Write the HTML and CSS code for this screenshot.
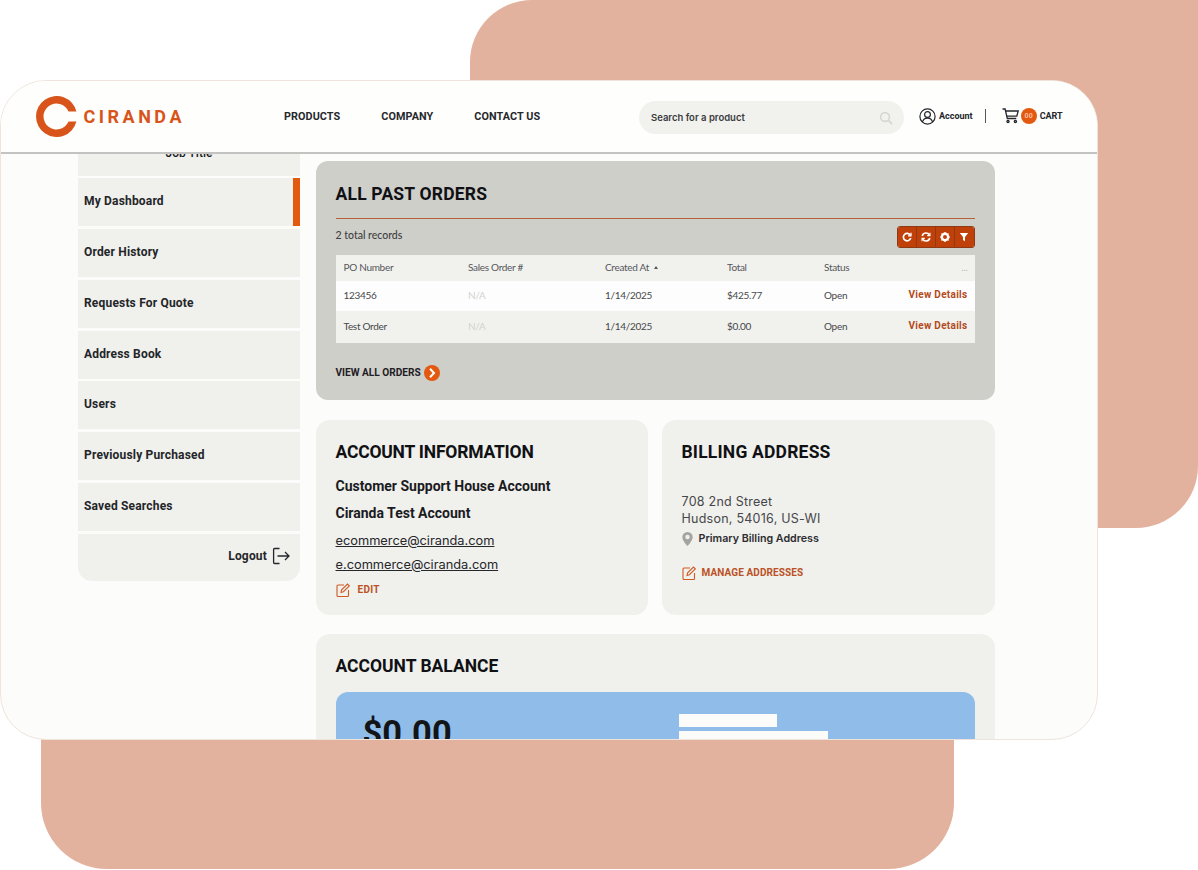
FILE: index.html
```html
<!DOCTYPE html>
<html lang="en">
<head>
<meta charset="utf-8">
<title>Ciranda Dashboard</title>
<link rel="stylesheet" href="styles.css">
</head>
<body>
<div class="blob blob-top"></div>
<div class="blob blob-bottom"></div>
<div class="window">
  <header class="header">
    <a class="logo">
      <svg width="41" height="41" viewBox="0.5 0.5 41 41"><path d="M40.9 16A20.5 20.5 0 1 0 40.9 26H33A13 13 0 1 1 33 16Z" fill="#d9541a"/></svg>
      <span class="logo-text">CIRANDA</span>
    </a>
    <nav class="nav">
      <a>PRODUCTS</a><a>COMPANY</a><a>CONTACT US</a>
    </nav>
    <div class="search">
      <span>Search for a product</span>
      <svg width="14" height="14" viewBox="0 0 14 14"><circle cx="6" cy="6" r="4.400" fill="none" stroke="#d6d6d2" stroke-width="1.600"/><path d="M9.200 9.200L13 13" stroke="#d6d6d2" stroke-width="1.800"/></svg>
    </div>
    <a class="account">
      <svg width="17" height="17" viewBox="0 0 17 17" fill="none" stroke="#24262b" stroke-width="1.200"><circle cx="8.500" cy="8.500" r="7.600"/><circle cx="8.500" cy="6.500" r="2.900"/><path d="M3.400 14c.8-2.600 2.700-3.800 5.100-3.800s4.300 1.200 5.100 3.800"/></svg>
      <span>Account</span>
    </a>
    <span class="sep"></span>
    <a class="cart">
      <svg width="17" height="16" viewBox="0 0 17 16" fill="none" stroke="#24262b" stroke-width="1.300"><path d="M.5 1h2.600l2.200 9.500h9"/><path d="M3.600 3h12.600l-1.400 5.200H4.800"/><circle cx="6" cy="13.600" r="1.100"/><circle cx="13.400" cy="13.600" r="1.100"/></svg>
      <span class="badge">00</span>
      <span>CART</span>
    </a>
  </header>
  <main class="main">
    <aside class="sidebar">
      <div class="side-top"><span>Job Title</span></div>
      <a class="side-item active">My Dashboard</a>
      <a class="side-item">Order History</a>
      <a class="side-item">Requests For Quote</a>
      <a class="side-item">Address Book</a>
      <a class="side-item">Users</a>
      <a class="side-item">Previously Purchased</a>
      <a class="side-item">Saved Searches</a>
      <a class="side-item logout">Logout
        <svg width="18" height="18" viewBox="0 0 18 18" fill="none" stroke="#24262b" stroke-width="1.300"><path d="M7.500 1.500H2.600a1 1 0 0 0-1 1v13a1 1 0 0 0 1 1h4.900"/><path d="M5.500 9h11.500M13 5l4 4-4 4"/></svg>
      </a>
    </aside>
    <section class="content">
      <div class="orders">
        <h2 class="title orders-title">ALL PAST ORDERS</h2>
        <div class="rule"></div>
        <div class="tools">
          <span class="records">2 total records</span>
          <div class="btns">
            <button class="btn"><svg width="10" height="10" viewBox="0 0 10 10" fill="none" stroke="#fff" stroke-width="1.700"><path d="M8.300 3.200A3.700 3.700 0 1 0 8.700 6"/><path d="M9 .8v3H6" stroke-width="1.300"/></svg></button>
            <button class="btn"><svg width="10" height="10" viewBox="0 0 10 10" fill="none" stroke="#fff" stroke-width="1.600"><path d="M1.200 4A3.900 3.900 0 0 1 8.400 3"/><path d="M8.800 6A3.900 3.900 0 0 1 1.600 7"/><path d="M9 .8v2.800H6.200M1 9.200V6.400h2.800" stroke-width="1.100"/></svg></button>
            <button class="btn"><svg width="10" height="10" viewBox="0 0 10 10"><circle cx="5" cy="5" r="3.200" fill="none" stroke="#fff" stroke-width="2.400"/><path d="M5 0v2M5 8v2M0 5h2M8 5h2M1.500 1.500l1.300 1.300M7.200 7.200l1.300 1.300M8.500 1.500L7.200 2.800M2.800 7.200L1.500 8.500" stroke="#fff" stroke-width="1.200"/></svg></button>
            <button class="btn"><svg width="10" height="10" viewBox="0 0 10 10"><path d="M.8 1h8.400L6 5v4.200L4 8V5z" fill="#fff"/></svg></button>
          </div>
        </div>
        <div class="table">
          <div class="row head">
            <span>PO Number</span><span>Sales Order #</span><span>Created At <i class="sort"></i></span><span>Total</span><span>Status</span><span class="dots">...</span>
          </div>
          <div class="row one">
            <span>123456</span><span class="na">N/A</span><span>1/14/2025</span><span>$425.77</span><span>Open</span><a class="details">View Details</a>
          </div>
          <div class="row two">
            <span>Test Order</span><span class="na">N/A</span><span>1/14/2025</span><span>$0.00</span><span>Open</span><a class="details">View Details</a>
          </div>
        </div>
        <a class="view-all">VIEW ALL ORDERS
          <svg width="16" height="16" viewBox="0 0 16 16"><circle cx="8" cy="8" r="8" fill="#e2590f"/><path d="M6 3.800L10 8l-4 4.200" fill="none" stroke="#fff" stroke-width="2"/></svg>
        </a>
      </div>
      <div class="cards">
        <div class="card info">
          <h2 class="title info-title">ACCOUNT INFORMATION</h2>
          <p class="strong first">Customer Support House Account</p>
          <p class="strong">Ciranda Test Account</p>
          <a class="mail first-mail">ecommerce@ciranda.com</a>
          <a class="mail">e.commerce@ciranda.com</a>
          <a class="action edit">
            <svg width="14" height="14" viewBox="0 0 14 14" fill="none" stroke="#cf5a26" stroke-width="1.100"><path d="M8 2H2a1 1 0 0 0-1 1v9.500a1 1 0 0 0 1 1h9.500a1 1 0 0 0 1-1V7"/><path d="M5 9.500l.6-2.600L11.500 1l1.800 1.800-5.900 5.900z"/></svg>
            EDIT
          </a>
        </div>
        <div class="card billing">
          <h2 class="title billing-title">BILLING ADDRESS</h2>
          <p class="address">708 2nd Street<br>Hudson, 54016, US-WI</p>
          <div class="primary">
            <svg width="11" height="14" viewBox="0 0 11 14"><path d="M5.500 0a5.200 5.200 0 0 1 5.200 5.200C10.700 8.500 5.500 14 5.500 14S.3 8.500.3 5.200A5.200 5.200 0 0 1 5.500 0z" fill="#a3a3a0"/><circle cx="5.500" cy="5" r="2.200" fill="#f0f0ec"/></svg>
            <span>Primary Billing Address</span>
          </div>
          <a class="action manage">
            <svg width="14" height="14" viewBox="0 0 14 14" fill="none" stroke="#cf5a26" stroke-width="1.100"><path d="M8 2H2a1 1 0 0 0-1 1v9.500a1 1 0 0 0 1 1h9.500a1 1 0 0 0 1-1V7"/><path d="M5 9.500l.6-2.600L11.500 1l1.800 1.800-5.900 5.900z"/></svg>
            MANAGE ADDRESSES
          </a>
        </div>
      </div>
      <div class="card balance">
        <h2 class="title">ACCOUNT BALANCE</h2>
        <div class="blue">
          <div class="amount">$0.00</div>
          <div class="bars"><div class="bar bar-a"></div><div class="bar bar-b"></div></div>
        </div>
      </div>
    </section>
  </main>
</div>
</body>
</html>
```

FILE: styles.css
```css
* { box-sizing: border-box; }
html, body { margin: 0; padding: 0; }
body {
  width: 1198px;
  height: 870px;
  position: relative;
  overflow: hidden;
  background: #fff;
  font-family: "Roboto", "Liberation Sans", sans-serif;
  color: #17181c;
}
a { display: block; }
p, h2 { margin: 0; }

.blob { position: absolute; background: #e3b29e; }
.blob-top { left: 470px; top: 0; width: 728px; height: 528px; border-radius: 62px 0 62px 0; }
.blob-bottom { left: 41px; top: 700px; width: 913px; height: 169px; border-radius: 0 0 66px 66px; }

.window {
  position: absolute;
  left: 0;
  top: 80px;
  width: 1098px;
  height: 660px;
  background: #fcfcfa;
  border: 1.500px solid #efe4db;
  border-radius: 46px;
  overflow: hidden;
  display: flex;
  flex-direction: column;
}

.header {
  flex: none;
  height: 72.500px;
  display: flex;
  align-items: center;
  padding-left: 34.500px;
  background: #fefefd;
  border-bottom: 2px solid #c3c4c2;
  position: relative;
  z-index: 2;
}
.logo { display: flex; align-items: center; gap: 7px; width: 248.500px; }
.logo-text { font-size: 18px; font-weight: 700; letter-spacing: 3.500px; color: #d9541a; }
.nav { display: flex; gap: 41px; width: 355px; font-size: 10.800px; font-weight: 700; letter-spacing: .08px; color: #26282c; }
.search {
  width: 265px;
  height: 33px;
  margin-top: 3px;
  border-radius: 17px;
  background: #f1f1ed;
  display: flex;
  align-items: center;
  justify-content: space-between;
  padding: 0 11px 0 12px;
  font-family: "Inter", sans-serif;
  font-size: 9.500px;
  font-weight: 600;
  color: #3a3b3e;
}
.account { display: flex; align-items: center; gap: 3px; margin-left: 15px; font-size: 9px; font-weight: 700; color: #24262b; }
.sep { width: 1px; height: 14px; background: #55565a; margin: 0 16px 0 12px; }
.cart { display: flex; align-items: center; gap: 2px; font-size: 9px; font-weight: 700; color: #24262b; }
.badge {
  width: 16px;
  height: 16px;
  border-radius: 50%;
  background: #e2590f;
  color: #f8bd9c;
  font-size: 7px;
  font-weight: 700;
  display: flex;
  align-items: center;
  justify-content: center;
  margin-right: 1px;
}

.main {
  flex: 1;
  min-height: 0;
  display: flex;
  align-items: flex-start;
  gap: 15.500px;
  padding-left: 77px;
}

.sidebar { width: 222px; flex: none; display: flex; flex-direction: column; gap: 2.800px; }
.side-top {
  height: 22px;
  background: #f0f0ec;
  overflow: hidden;
  text-align: center;
  font-size: 12px;
  font-weight: 500;
}
.side-top span { display: block; margin-top: -8px; line-height: 14px; }
.side-item {
  height: 48px;
  background: #f0f0ec;
  display: flex;
  align-items: center;
  padding: 0 6px 2px;
  font-size: 12px;
  font-weight: 700;
  letter-spacing: .18px;
  color: #232529;
}
.active { border-right: 7px solid #e2590f; }
.logout {
  height: 47px;
  justify-content: flex-end;
  gap: 5px;
  padding-right: 10px;
  border-radius: 0 0 14px 14px;
}

.content { width: 679px; flex: none; padding-top: 7px; display: flex; flex-direction: column; gap: 20px; }
.title { font-size: 17.500px; font-weight: 700; line-height: 22px; color: #101114; }
.orders-title { letter-spacing: .2px; }
.info-title { letter-spacing: -.2px; }
.billing-title { letter-spacing: .2px; }

.orders { height: 239px; background: #cfcfca; border-radius: 12px; padding: 22px 20px 0; }
.rule { height: 1px; background: #b8603a; margin-top: 13px; }
.tools { display: flex; justify-content: space-between; align-items: center; height: 22px; margin-top: 7px; }
.records { font-family: "Lato", sans-serif; font-size: 10.500px; font-weight: 500; color: #3d3e40; padding-bottom: 4px; }
.btns { display: flex; border-radius: 3px; overflow: hidden; border: 1px solid #8f3a14; height: 22px; }
.btn {
  width: 19px;
  padding: 0;
  border: 0;
  border-right: 1px solid #8f3a14;
  background: #c0400a;
  display: flex;
  align-items: center;
  justify-content: center;
}
.btn:last-child { border-right: 0; }

.table { margin-top: 7px; font-family: "Lato", sans-serif; font-size: 10px; letter-spacing: -.3px; color: #46474a; }
.row {
  display: grid;
  grid-template-columns: 124.500px 137px 122px 97px 60px 1fr;
  align-items: center;
  padding: 0 7px 2px 8px;
}
.head { height: 26px; background: #f1f2ee; color: #55565a; }
.one { height: 30px; background: #fdfdfd; }
.two { height: 32px; background: #f1f2ee; }
.na { color: #d3d3d0; }
.sort {
  display: inline-block;
  width: 0;
  height: 0;
  margin: 0 0 2px 3px;
  border: 2.500px solid transparent;
  border-top: 0;
  border-bottom: 3px solid #55565a;
}
.dots { text-align: right; color: #bdbdba; }
.details {
  text-align: right;
  font-family: "Roboto", sans-serif;
  font-size: 10px;
  font-weight: 700;
  letter-spacing: .3px;
  color: #b24a20;
}
.view-all {
  display: flex;
  align-items: center;
  gap: 3px;
  margin-top: 22px;
  font-size: 10.100px;
  font-weight: 700;
  color: #1f2024;
}

.cards { display: flex; gap: 14px; height: 195px; }
.card { background: #f0f0ec; border-radius: 14px; padding: 21px 20px 0; }
.info { width: 332px; }
.billing { flex: 1; }
.strong { font-size: 14px; font-weight: 700; line-height: 17px; color: #1a1b1f; margin-top: 10px; }
.strong.first { margin-top: 15px; }
.mail {
  font-family: "Inter", sans-serif;
  font-size: 12.800px;
  line-height: 15px;
  color: #26272b;
  text-decoration: underline;
  margin-top: 9px;
}
.first-mail { margin-top: 11px; }
.action {
  display: flex;
  align-items: center;
  gap: 8px;
  font-size: 10px;
  font-weight: 700;
  letter-spacing: .3px;
  color: #bb5226;
}
.edit { margin-top: 11px; }
.address {
  font-family: "Inter", sans-serif;
  font-size: 12.500px;
  line-height: 17px;
  letter-spacing: .25px;
  color: #46474a;
  margin-top: 30px;
}
.primary {
  display: flex;
  align-items: center;
  gap: 6px;
  margin-top: 5px;
  font-family: "Inter", sans-serif;
  font-size: 10.700px;
  font-weight: 600;
  color: #2c2d30;
}
.manage { margin-top: 20px; gap: 6px; letter-spacing: .1px; }

.balance { height: 300px; margin-top: -1px; padding-top: 21px; }
.blue {
  display: flex;
  margin-top: 15px;
  height: 200px;
  background: #8fbce9;
  border-radius: 12px;
  padding: 20px 0 0 27px;
}
.amount { width: 316px; font-size: 34.500px; font-weight: 700; line-height: 42px; color: #131418; }
.bars { display: flex; flex-direction: column; gap: 4px; padding-top: 2px; }
.bar { background: #fbfbfa; height: 13px; }
.bar-a { width: 98px; }
.bar-b { width: 149px; }
```
